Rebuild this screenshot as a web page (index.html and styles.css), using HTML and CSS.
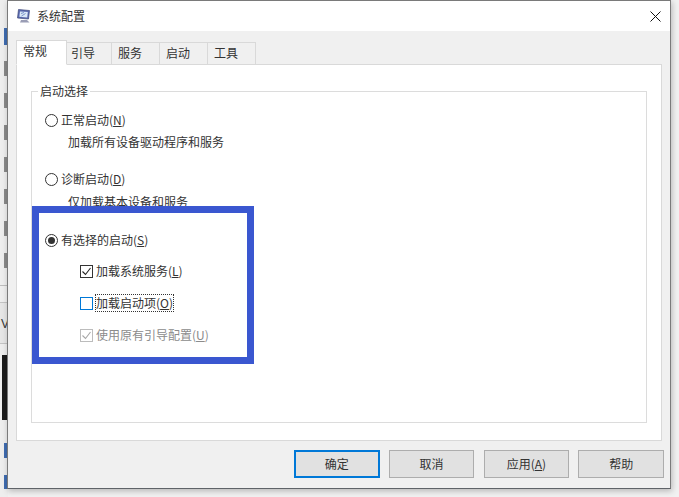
FILE: index.html
```html
<!DOCTYPE html>
<html lang="zh">
<head>
<meta charset="utf-8">
<title>系统配置</title>
<link rel="stylesheet" href="styles.css">
</head>
<body>
<div class="behind">
  <div class="strip">
    <span class="s top"></span><span class="s blue h17"></span><span class="s gap16"></span>
    <span class="s grey"></span><span class="s gap17"></span>
    <span class="s grey"></span><span class="s gap17"></span>
    <span class="s grey"></span><span class="s gap17"></span>
    <span class="s grey"></span><span class="s gap17"></span>
    <span class="s grey"></span><span class="s gap17"></span>
    <span class="s grey"></span><span class="s gap17"></span>
    <span class="s grey"></span><span class="s gap17"></span>
    <span class="s row"></span>
    <span class="s v">V</span>
    <span class="s gap11"></span>
    <span class="s dark"></span>
    <span class="s gap23"></span>
    <span class="s blue h15"></span><span class="s gap17"></span><span class="s blue h14"></span>
  </div>
</div>
<div class="window">
  <header class="titlebar">
    <svg class="appicon" viewBox="0 0 14 14" width="14" height="14"><path d="M1.5.5l11 1-1 8.500-11-1z" fill="#5a6ab0" stroke="#3d4778" stroke-width=".7"/><path d="M3 2.400l7.800.7-.6 5.400-7.800-.7z" fill="#dbe8f7"/><path d="M4 4.500l3-1M4.500 7l4-2.500" stroke="#6d8ac4" stroke-width=".9" fill="none"/><path d="M4 11h6l2.500 2.500H3z" fill="#9a9db5"/></svg>
    <span class="title">系统配置</span>
    <svg class="close" viewBox="0 0 11 11" width="11" height="11"><path d="M.5.5l10 10M10.500.5l-10 10" stroke="#111" stroke-width="1" fill="none"/></svg>
  </header>
  <div class="client">
    <div class="tabs">
      <span class="tab active">常规</span>
      <span class="tab second-tab">引导</span>
      <span class="tab">服务</span>
      <span class="tab">启动</span>
      <span class="tab">工具</span>
    </div>
    <div class="panel">
      <fieldset class="group">
        <legend>启动选择</legend>
        <div class="opt first"><span class="radio"></span><span>正常启动(<u>N</u>)</span></div>
        <p class="desc">加载所有设备驱动程序和服务</p>
        <div class="opt second"><span class="radio"></span><span>诊断启动(<u>D</u>)</span></div>
        <p class="desc low">仅加载基本设备和服务</p>
        <div class="opt third"><span class="radio on"></span><span>有选择的启动(<u>S</u>)</span></div>
        <div class="check c1"><span class="box"><svg viewBox="0 0 13 13" width="13" height="13"><path d="M2.500 6.500l3 3 5-6.500" fill="none" stroke="#222" stroke-width="1.100"/></svg></span><span>加载系统服务(<u>L</u>)</span></div>
        <div class="check c2"><span class="box hot"></span><span class="focus">加载启动项(<u>O</u>)</span></div>
        <div class="check c3 off"><span class="box"><svg viewBox="0 0 13 13" width="13" height="13"><path d="M2.500 6.500l3 3 5-6.500" fill="none" stroke="#a6a6a6" stroke-width="1.100"/></svg></span><span>使用原有引导配置(<u>U</u>)</span></div>
      </fieldset>
    </div>
    <div class="actions">
      <button class="btn default">确定</button>
      <button class="btn">取消</button>
      <button class="btn">应用(<u>A</u>)</button>
      <button class="btn">帮助</button>
    </div>
  </div>
  <div class="mark"></div>
</div>
</body>
</html>
```
FILE: styles.css
```css
* { box-sizing: border-box; }
html, body { margin: 0; padding: 0; }
body {
  width: 679px; height: 497px; overflow: hidden; position: relative;
  background: #f1f1f1;
  font: 12px/16px "Noto Sans CJK SC", "Liberation Sans", sans-serif;
  color: #333;
}
.behind { position: absolute; inset: 0; }
.strip { width: 8px; height: 497px; display: flex; flex-direction: column; background: #eeeeee; }
.s { display: block; flex: none; }
.top { height: 28px; }
.blue { background: linear-gradient(90deg, #eeeeee 4px, #3f6cb0 4px); }
.h17 { height: 17px; }
.h15 { height: 15px; }
.h14 { height: 14px; }
.gap16 { height: 16px; }
.gap17 { height: 17px; }
.gap11 { height: 11px; }
.gap23 { height: 23px; }
.grey { height: 15px; background: linear-gradient(90deg, #eeeeee 4px, #8a8a8a 4px); }
.row { height: 17px; border-top: 1px solid #bdbdbd; }
.v {
  height: 42px; background: #e6e6e6;
  border-top: 1px solid #c4c4c4; border-bottom: 1px solid #c4c4c4;
  font: 12px/42px "Liberation Sans", sans-serif; color: #333;
  padding-left: 1px; overflow: hidden;
}
.dark { height: 65px; background: linear-gradient(90deg, #f0f0f0 2px, #1c1c1c 2px); }

.window {
  position: absolute; left: 7px; top: 0; width: 664px; height: 489px;
  background: #f0f0f0;
  border: 1px solid #7a7a7a; border-bottom-color: #5f6368;
  box-shadow: 1px 2px 6px rgba(0,0,0,.25);
  display: flex; flex-direction: column;
}
.titlebar { height: 30px; background: #fff; display: flex; align-items: center; padding: 0 9px; flex: none; }
.appicon { flex: none; }
.title { margin-left: 6px; }
.close { margin-left: auto; }
.client { flex: 1; padding: 9px 8px 0; display: flex; flex-direction: column; }
.tabs { display: flex; height: 24px; align-items: flex-end; position: relative; z-index: 1; }
.tab {
  width: 49px; height: 22px; background: #f0f0f0;
  border: 1px solid #d9d9d9; border-bottom: 0; margin-left: -1px;
  padding-left: 6px; line-height: 20px;
}
.tab.active { width: 51px; height: 25px; margin-left: 0; margin-bottom: -1px; margin-right: -1px; background: #fff; border-bottom: 1px solid #fff; position: relative; z-index: 2; line-height: 20px; }
.tab.second-tab { width: 47px; padding-left: 5px; }
.panel { height: 377px; background: #fff; border: 1px solid #d9d9d9; padding: 18px 14px; }
.group { margin: 0; height: 340px; border: 1px solid #dcdcdc; padding: 0 0 0 13px; position: relative; min-width: 0; }
.group legend { padding: 0 2px; margin-left: -7px; line-height: 16px; }
.opt, .check { display: flex; align-items: center; height: 16px; }
.radio { width: 13px; height: 13px; border: 1px solid #333; border-radius: 50%; margin-right: 3px; background: #fff; position: relative; flex: none; }
.radio.on::after { content: ""; position: absolute; left: 2px; top: 2px; width: 7px; height: 7px; border-radius: 50%; background: #333; }
.opt.first { margin-top: 13px; }
.desc { margin: 6px 0 0 23px; height: 16px; }
.opt.second { margin-top: 21px; }
.desc.low { margin-top: 7px; }
.opt.third { margin-top: 22px; }
.check { margin-left: 35px; }
.c1 { margin-top: 15px; }
.c2 { margin-top: 16px; }
.c3 { margin-top: 16px; color: #8b8b8b; }
.box { width: 13px; height: 13px; border: 1px solid #333; margin-right: 3px; background: #fff; flex: none; position: relative; }
.box svg { position: absolute; left: -1px; top: -1px; }
.box.hot { border-color: #0078d7; }
.off .box { border-color: #bcbcbc; }
.focus { outline: 1px dotted #333; }
.actions { display: flex; gap: 9.33px; padding: 9px 0 0 278px; margin-right: -2px; }
.btn {
  width: 85.5px; height: 28px; padding: 0; flex: none;
  font: inherit; color: #333;
  background: #e1e1e1; border: 1px solid #adadad;
}
.btn.default { border: 2px solid #0078d7; }
.mark { position: absolute; left: 24px; top: 205px; width: 222px; height: 158px; border: 7px solid #3a57d0; }
```
